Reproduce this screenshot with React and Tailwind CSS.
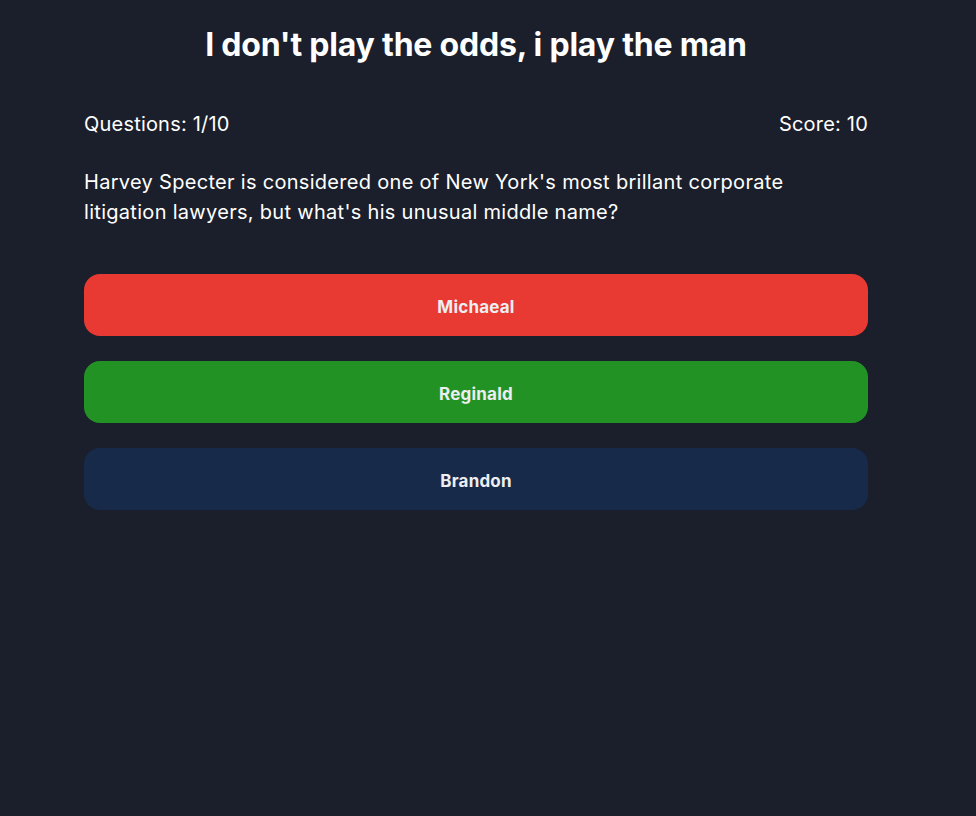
import React from 'react';

const answers = [
  { label: 'Michaeal', color: 'bg-[#e83a33]' },
  { label: 'Reginald', color: 'bg-[#229224]' },
  { label: 'Brandon', color: 'bg-[#182a4a]' },
];

export default function App() {
  return (
    <div className="min-h-[816px] bg-[#1b1f2b] text-white font-['Inter','Noto_Sans',sans-serif]">
      <div className="w-[952px] pt-[26px]">
        <h1 className="text-center text-[32px] font-bold leading-[38px] tracking-[-0.2px]">
          I don't play the odds, i play the man
        </h1>
        <div className="mx-auto w-[784px]">
          <div className="mt-[45px] flex justify-between text-[20px] leading-[30px] tracking-[0.2px]">
            <span>Questions: 1/10</span>
            <span>Score: 10</span>
          </div>
          <p className="mt-[28px] text-[20px] leading-[30px] tracking-[0.3px] pr-[60px]">
            Harvey Specter is considered one of New York's most brillant corporate litigation lawyers, but what's his unusual middle name?
          </p>
          <div className="mt-[47px] flex flex-col gap-[25px]">
            {answers.map((a) => (
              <button
                key={a.label}
                className={`h-[62px] w-full rounded-[16px] pt-[5px] ${a.color} text-[17px] font-bold tracking-[0.2px] text-[#eceef2]`}
              >
                {a.label}
              </button>
            ))}
          </div>
        </div>
      </div>
    </div>
  );
}
